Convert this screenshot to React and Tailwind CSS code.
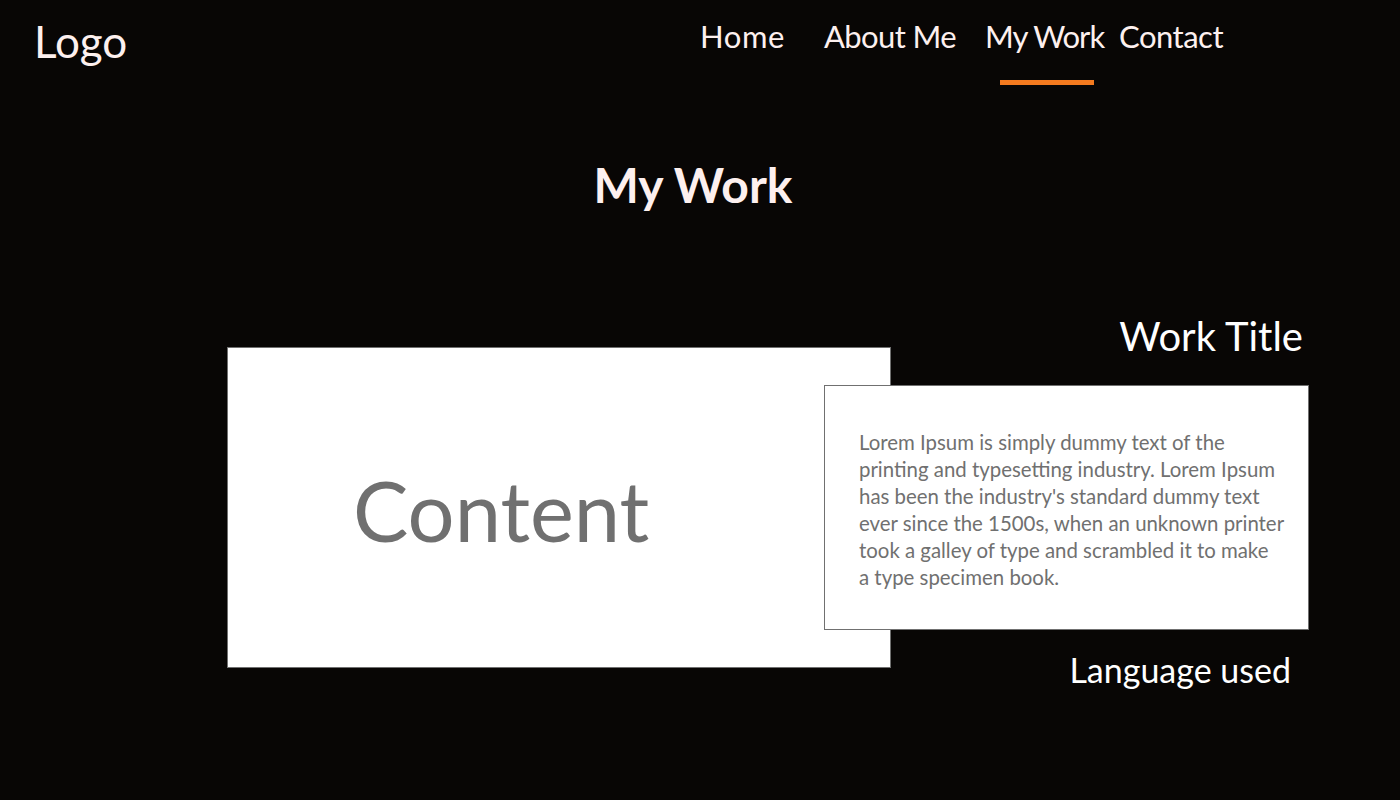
import React from "react";

export default function App() {
  return (
    <div
      className="min-h-[800px] w-full bg-[#080605] text-[#fdf0ef]"
      style={{ fontFamily: "Lato, 'Open Sans', sans-serif" }}
    >
      <header className="flex items-start pt-[19px]">
        <div className="w-[700px] pl-[34px] text-[44px] leading-none">Logo</div>
        <nav className="flex items-start whitespace-nowrap pt-[2px] text-[31px] leading-none">
          <a className="w-[124px] tracking-[0.6px]">Home</a>
          <a className="w-[161px] tracking-[-0.6px]">About Me</a>
          <div className="flex w-[134px] flex-col">
            <a className="tracking-[-1px]">My Work</a>
            <span className="ml-[15px] mt-[28px] h-[5px] w-[94px] bg-[#f47a1f]"></span>
          </div>
          <a className="tracking-[-0.5px]">Contact</a>
        </nav>
      </header>

      <h1 className="mt-[76px] pr-[14px] text-center text-[48px] font-bold leading-none">
        My Work
      </h1>

      <section className="mt-[107px] flex items-start pl-[227px]">
        <div className="mt-[31px] flex h-[321px] w-[664px] shrink-0 items-center border border-[#707070] bg-white pl-[125px] pt-[6px]">
          <span className="text-[83px] leading-none text-[#707070]">Content</span>
        </div>
        <div className="relative z-10 ml-[-67px] flex w-[485px] shrink-0 flex-col">
          <div className="pr-[6px] text-right text-[40px] leading-none text-white">Work Title</div>
          <div className="mt-[29px] h-[245px] border border-[#707070] bg-white pl-[34px] pt-[43px] text-[20.4px] leading-[27px] text-[#707070] whitespace-nowrap">
            Lorem Ipsum is simply dummy text of the
            <br />
            printing and typesetting industry. Lorem Ipsum
            <br />
            has been the industry's standard dummy text
            <br />
            ever since the 1500s, when an unknown printer
            <br />
            took a galley of type and scrambled it to make
            <br />
            a type specimen book.
          </div>
          <div className="mt-[23px] pr-[18px] text-right text-[34px] leading-none text-white">
            Language used
          </div>
        </div>
      </section>
    </div>
  );
}
